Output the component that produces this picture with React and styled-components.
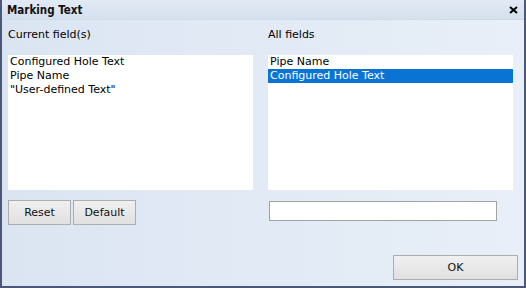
import React from "react";
import styled, { createGlobalStyle } from "styled-components";

const Global = createGlobalStyle`
  html, body { margin: 0; padding: 0; background: #4b5878; }
  body { font-family: "DejaVu Sans", sans-serif; font-size: 11px; color: #000; }
  * { box-sizing: border-box; }
`;

const Window = styled.div`
  width: 526px;
  height: 288px;
  border: 2px solid #4b5878;
  border-top: 0;
  display: flex;
  flex-direction: column;
  background: linear-gradient(to right, #dbe5f2, #e8eff8);
`;

const TitleBar = styled.div`
  height: 20px;
  display: flex;
  align-items: center;
  justify-content: space-between;
  padding: 0 6px 0 5px;
  background: linear-gradient(to bottom, #e2eaf5, #d5e0ee);
  border-bottom: 1px solid #d0dbea;
`;

const Title = styled.span`
  font-family: "DejaVu Sans Condensed", "DejaVu Sans", sans-serif;
  font-weight: bold;
  font-size: 11.5px;
  color: #111;
`;

const Body = styled.div`
  flex: 1;
  display: flex;
  flex-direction: column;
  padding: 8px 6px 6px 6px;
`;

const Columns = styled.div`
  display: grid;
  grid-template-columns: 245px 245px;
  column-gap: 15px;
`;

const Column = styled.div`
  display: flex;
  flex-direction: column;
`;

const Label = styled.div`
  height: 14px;
  line-height: 14px;
  margin-bottom: 13px;
`;

const List = styled.div`
  height: 135px;
  background: #fff;
  padding: 0;
`;

const Item = styled.div`
  height: 14px;
  line-height: 14px;
  padding-left: 2px;
  white-space: nowrap;
  background: ${(p) => (p.$selected ? "#0a74d5" : "transparent")};
  color: ${(p) => (p.$selected ? "#fff" : "#000")};
`;

const Controls = styled.div`
  margin-top: 10px;
  height: 25px;
  display: flex;
  gap: 2px;
`;

const Button = styled.button`
  width: ${(p) => p.$w}px;
  height: 25px;
  border: 1px solid #adadad;
  border-radius: 0;
  background: linear-gradient(to bottom, #f0f0f0, #e0e0e0);
  font-family: inherit;
  font-size: 11px;
  color: #111;
  padding: 0;
`;

const TextInput = styled.input`
  margin: 1px 0 0 1px;
  width: 228px;
  height: 20px;
  border: 1px solid #a3a3a3;
  background: #fff;
  padding: 0 2px;
  font-family: inherit;
  font-size: 11px;
  outline: none;
`;

const Footer = styled.div`
  margin-top: 30px;
  display: flex;
  justify-content: flex-end;
`;

const CloseIcon = () => (
  <svg width="9" height="8" viewBox="0 0 9 8">
    <path d="M1 1 L8 7 M8 1 L1 7" stroke="#000" strokeWidth="2" />
  </svg>
);

export default function App() {
  return (
    <>
      <Global />
      <Window>
        <TitleBar>
          <Title>Marking Text</Title>
          <CloseIcon />
        </TitleBar>
        <Body>
          <Columns>
            <Column>
              <Label>Current field(s)</Label>
              <List>
                <Item>Configured Hole Text</Item>
                <Item>Pipe Name</Item>
                <Item>"User-defined Text"</Item>
              </List>
              <Controls>
                <Button $w={63}>Reset</Button>
                <Button $w={63}>Default</Button>
              </Controls>
            </Column>
            <Column>
              <Label>All fields</Label>
              <List>
                <Item>Pipe Name</Item>
                <Item $selected>Configured Hole Text</Item>
              </List>
              <Controls>
                <TextInput defaultValue="" />
              </Controls>
            </Column>
          </Columns>
          <Footer>
            <Button $w={125}>OK</Button>
          </Footer>
        </Body>
      </Window>
    </>
  );
}
